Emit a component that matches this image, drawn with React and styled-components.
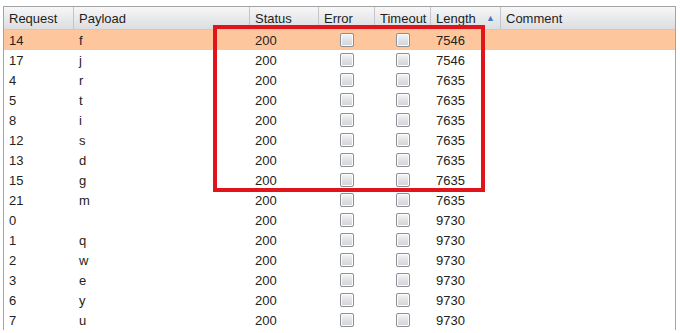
import styled, { createGlobalStyle } from 'styled-components'

const Global = createGlobalStyle`
  body {
    margin: 0;
    background: #fff;
    font-family: "Liberation Sans", Arial, sans-serif;
  }
`

const COLS = '70px 176px 69px 56px 56px 70px 1fr'

const Page = styled.div`
  padding: 6px 4px 0 3px;
  height: 327px;
  overflow: hidden;
`

const Table = styled.div`
  position: relative;
  border-top: 1px solid #a3a3a3;
  border-left: 1px solid #a3a3a3;
  border-right: 1px solid #a3a3a3;
`

const HeaderRow = styled.div`
  display: grid;
  grid-template-columns: ${COLS};
  height: 22px;
  background: linear-gradient(#f7f7f8, #e9eaec 50%, #dcdde1);
  border-bottom: 1px solid #c9cacd;
`

const HeadCell = styled.div`
  display: flex;
  align-items: center;
  justify-content: space-between;
  padding: 0 5px;
  font-size: 13px;
  color: #1e1e1e;
  border-right: ${p => (p.$last ? 'none' : '1px solid #c4c5c8')};
  white-space: nowrap;
  overflow: hidden;
`

const SortArrow = styled.span`
  font-size: 9px;
  color: #4d7bb5;
`

const Row = styled.div`
  display: grid;
  grid-template-columns: ${COLS};
  height: 20px;
  background: ${p => (p.$selected ? '#fdc69d' : '#fff')};
`

const Cell = styled.div`
  display: flex;
  align-items: center;
  justify-content: ${p => (p.$center ? 'center' : 'flex-start')};
  padding: 0 5px;
  font-size: 13px;
  color: #222;
  white-space: nowrap;
`

const Check = styled.span`
  display: block;
  width: 12px;
  height: 12px;
  border: 1px solid #8c8f94;
  border-radius: 2px;
  background: linear-gradient(#f6f6f7, #dfe0e3 55%, #d2d4d8);
  box-shadow: inset 0 0 0 1px #fbfbfb;
`

const Highlight = styled.div`
  position: absolute;
  left: 209px;
  top: 18px;
  width: 264px;
  height: 159px;
  border: 4px solid #e2141b;
  pointer-events: none;
`

const rows = [
  ['14', 'f', '7546'],
  ['17', 'j', '7546'],
  ['4', 'r', '7635'],
  ['5', 't', '7635'],
  ['8', 'i', '7635'],
  ['12', 's', '7635'],
  ['13', 'd', '7635'],
  ['15', 'g', '7635'],
  ['21', 'm', '7635'],
  ['0', '', '9730'],
  ['1', 'q', '9730'],
  ['2', 'w', '9730'],
  ['3', 'e', '9730'],
  ['6', 'y', '9730'],
  ['7', 'u', '9730'],
]

export default function App() {
  return (
    <Page>
      <Global />
      <Table>
        <HeaderRow>
          <HeadCell>Request</HeadCell>
          <HeadCell>Payload</HeadCell>
          <HeadCell>Status</HeadCell>
          <HeadCell>Error</HeadCell>
          <HeadCell>Timeout</HeadCell>
          <HeadCell>
            Length
            <SortArrow>▲</SortArrow>
          </HeadCell>
          <HeadCell $last>Comment</HeadCell>
        </HeaderRow>
        {rows.map(([req, payload, len], i) => (
          <Row key={req} $selected={i === 0}>
            <Cell>{req}</Cell>
            <Cell>{payload}</Cell>
            <Cell>200</Cell>
            <Cell $center><Check /></Cell>
            <Cell $center><Check /></Cell>
            <Cell>{len}</Cell>
            <Cell />
          </Row>
        ))}
        <Highlight />
      </Table>
    </Page>
  )
}
